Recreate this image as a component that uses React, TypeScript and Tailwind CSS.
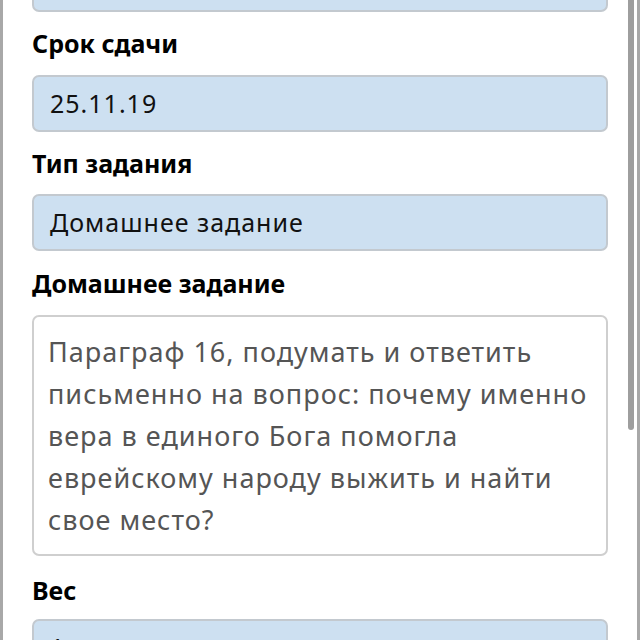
import React from "react";

const font = { fontFamily: "'Noto Sans', 'Open Sans', sans-serif" };

function Label({ children, className = "mt-[19px]" }: { children: React.ReactNode; className?: string }) {
  return (
    <div className={`h-[30px] text-[25px] leading-[24px] font-bold text-black ${className}`}>
      {children}
    </div>
  );
}

function Field({ value, className = "" }: { value: string; className?: string }) {
  return (
    <div
      className={`h-[57px] w-[576px] rounded-[7px] border-2 border-[#c3c9cf] bg-[#cde0f1] px-[16px] pt-[1px] flex items-center text-[25px] tracking-[1px] text-[#111] ${className}`}
    >
      {value}
    </div>
  );
}

const lines = [
  "Параграф 16, подумать и ответить",
  "письменно на вопрос: почему именно",
  "вера в единого Бога помогла",
  "еврейскому народу выжить и найти",
  "свое место?",
];

export default function App() {
  return (
    <div
      className="relative h-[640px] w-[640px] overflow-hidden bg-white border-l-[3px] border-[#a8a8a8]"
      style={font}
    >
      <div className="pl-[29px]">
        <Field value="" className="-mt-[45px]" />

        <Label>Срок сдачи</Label>
        <Field value="25.11.19" className="mt-[14px]" />

        <Label>Тип задания</Label>
        <Field value="Домашнее задание" className="mt-[13px]" />

        <Label className="mt-[20px]">Домашнее задание</Label>
        <div className="mt-[14px] h-[241px] w-[576px] rounded-[7px] border-2 border-[#cfcfcf] bg-white pl-[14px] pt-[14px] text-[27px] leading-[42px] tracking-[1px] text-[#555]">
          {lines.map((l) => (
            <div key={l} className="whitespace-nowrap">
              {l}
            </div>
          ))}
        </div>

        <Label className="mt-[22px]">Вес</Label>
        <Field value="1" className="mt-[11px]" />
      </div>

      {/* scrollbar */}
      <div className="absolute left-[625px] top-0 h-[430px] w-[6px] rounded-b-full bg-[#9e9e9e]" />
      <div className="absolute right-0 top-0 h-full w-[3px] bg-[#a8a8a8]" />
    </div>
  );
}
